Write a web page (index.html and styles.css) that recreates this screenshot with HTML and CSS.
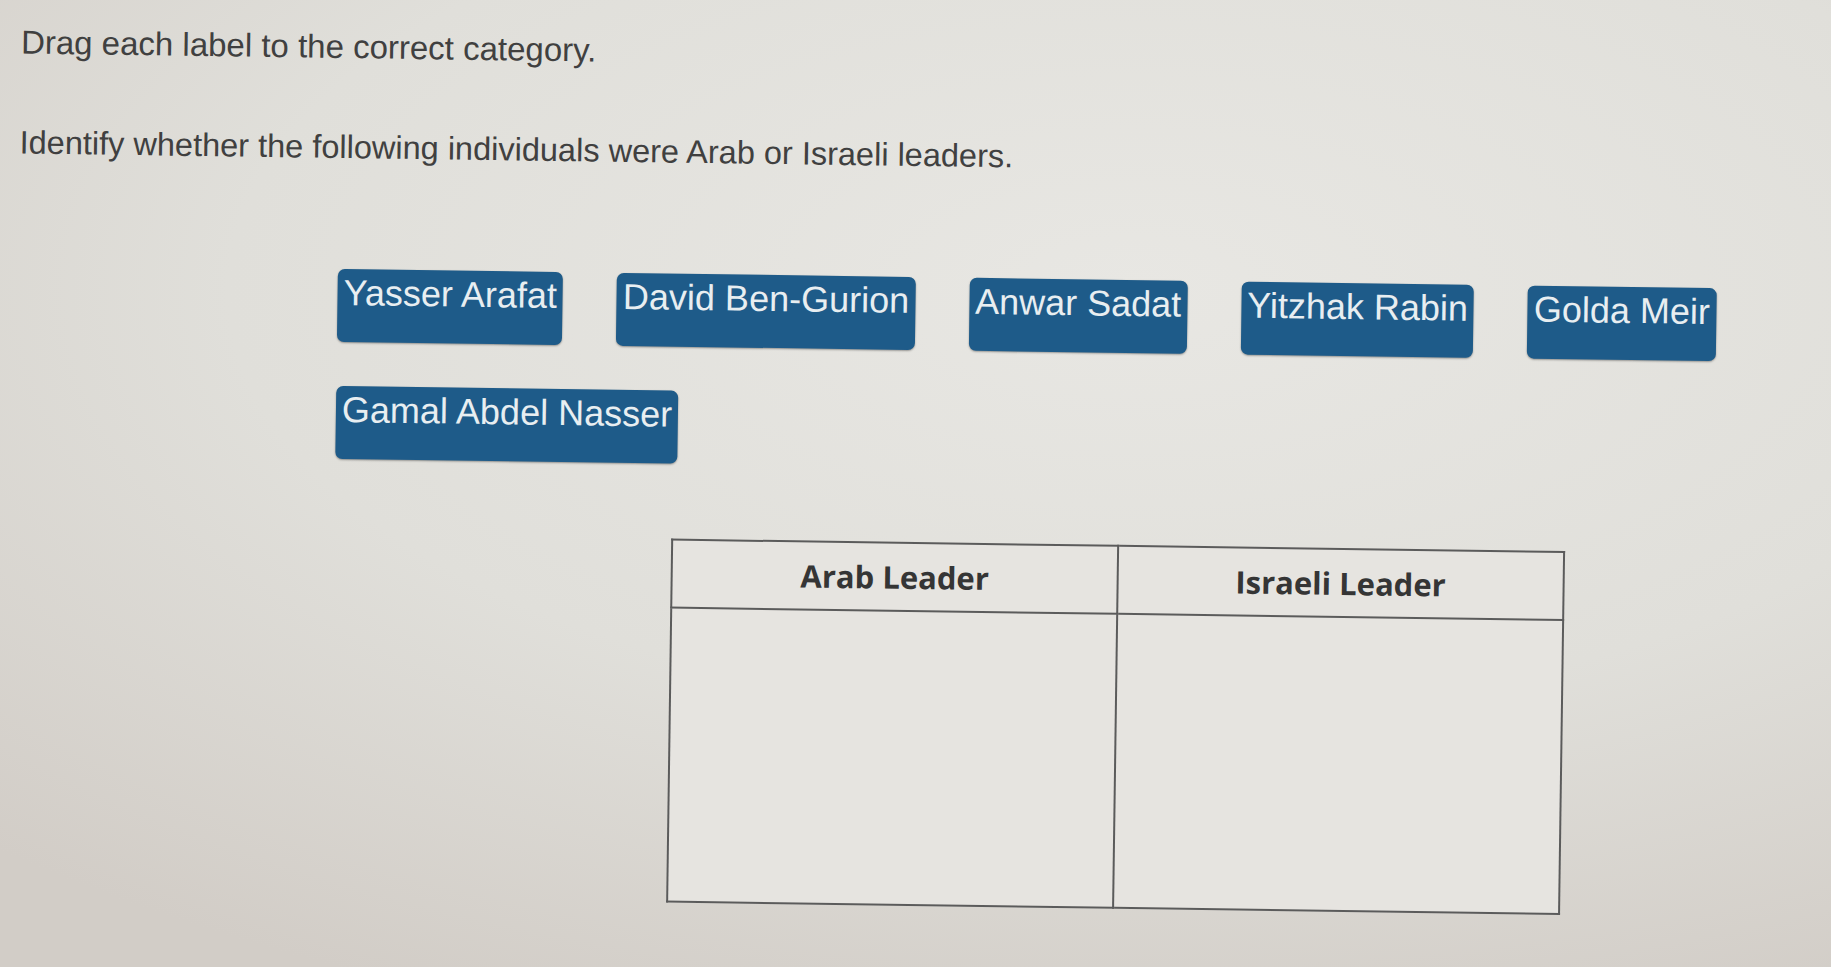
FILE: index.html
```html
<!DOCTYPE html>
<html lang="en">
<head>
<meta charset="utf-8">
<title>Drag each label to the correct category</title>
<link rel="stylesheet" href="styles.css">
</head>
<body>
<main class="page">
  <p class="instr">Drag each label to the correct category.</p>
  <p class="prompt">Identify whether the following individuals were Arab or Israeli leaders.</p>
  <div class="labels">
    <div class="label">Yasser Arafat</div>
    <div class="label">David Ben-Gurion</div>
    <div class="label">Anwar Sadat</div>
    <div class="label">Yitzhak Rabin</div>
    <div class="label">Golda Meir</div>
    <div class="label">Gamal Abdel Nasser</div>
  </div>
  <table class="cats">
    <thead>
      <tr><th>Arab Leader</th><th>Israeli Leader</th></tr>
    </thead>
    <tbody>
      <tr><td></td><td></td></tr>
    </tbody>
  </table>
</main>
</body>
</html>
```
FILE: styles.css
```css
html, body {
  margin: 0;
  height: 100%;
  overflow: hidden;
}
body {
  background: radial-gradient(ellipse 90% 80% at 62% 30%, #e8e7e3 0%, #e0dfda 55%, #d2cdc7 100%);
  font-family: "Liberation Sans", Arial, sans-serif;
}
.page {
  box-sizing: border-box;
  height: 967px;
  padding: 36px 0 0 15px;
  transform: rotate(0.8deg);
  transform-origin: 915px 483px;
}
.instr, .prompt {
  margin: 0;
  font-size: 33px;
  line-height: 37px;
  color: #404040;
}
.prompt {
  margin-top: 64px;
  font-size: 32.5px;
}
.labels {
  display: flex;
  flex-wrap: wrap;
  column-gap: 54px;
  row-gap: 44px;
  width: 1420px;
  margin: 103px 0 0 320px;
}
.label {
  background: #1e5b89;
  color: #e8eef1;
  font-size: 36px;
  line-height: 41px;
  padding: 3px 6px 29px;
  border-radius: 7px;
  box-shadow: 0 1px 2px rgba(0, 0, 0, 0.35);
  white-space: nowrap;
}
.cats {
  margin: 75px 0 0 657px;
  width: 894px;
  border-collapse: collapse;
  table-layout: fixed;
  background: #e6e4e0;
}
.cats th, .cats td {
  border: 2px solid #5b5b5b;
  padding: 0;
}
.cats th {
  height: 66px;
  font-family: "Open Sans", "DejaVu Sans", sans-serif;
  font-weight: 700;
  font-size: 31px;
  color: #353535;
  text-align: center;
}
.cats td {
  height: 292px;
}
```
